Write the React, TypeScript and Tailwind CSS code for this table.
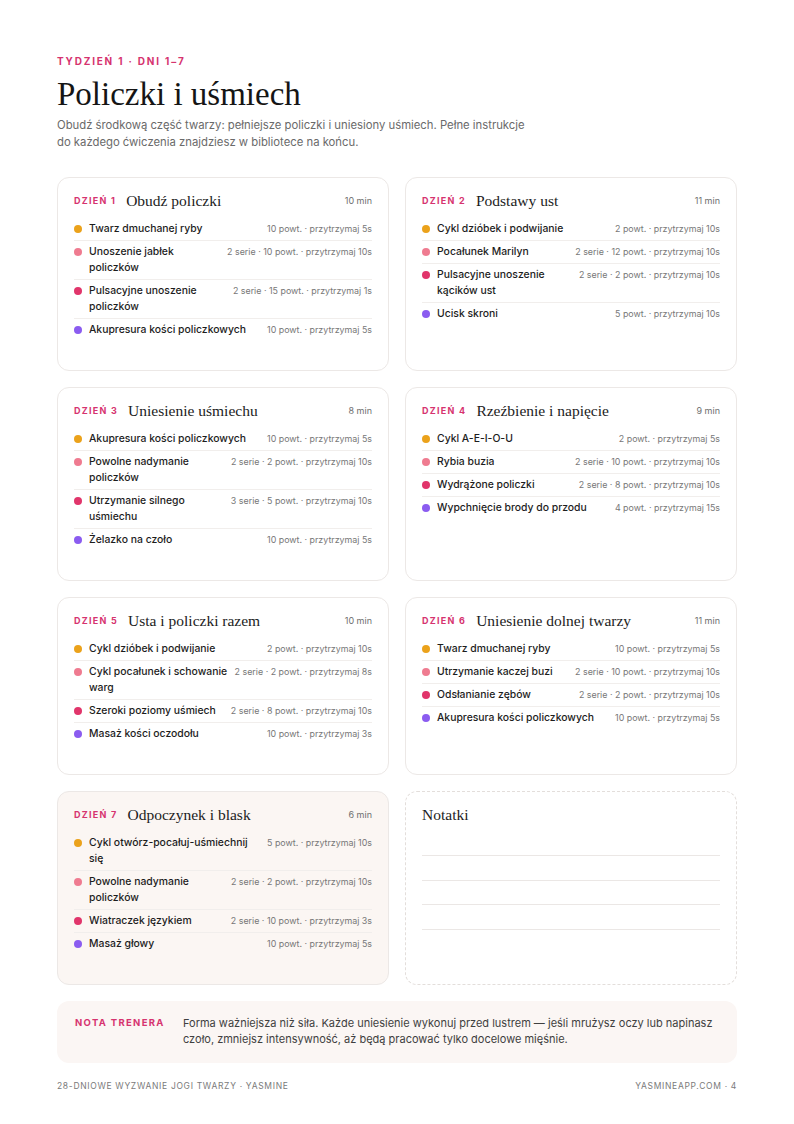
import React from "react";

type Ex = { name: string; spec: string };
type Day = { n: number; title: string; min: string; items: Ex[]; rest?: boolean };

const DOTS = ["bg-[#eba21b]", "bg-[#ef7b90]", "bg-[#e1356b]", "bg-[#8b5cf0]"];

const days: Day[] = [
  {
    n: 1,
    title: "Obudź policzki",
    min: "10 min",
    items: [
      { name: "Twarz dmuchanej ryby", spec: "10 powt. · przytrzymaj 5s" },
      { name: "Unoszenie jabłek policzków", spec: "2 serie · 10 powt. · przytrzymaj 10s" },
      { name: "Pulsacyjne unoszenie policzków", spec: "2 serie · 15 powt. · przytrzymaj 1s" },
      { name: "Akupresura kości policzkowych", spec: "10 powt. · przytrzymaj 5s" },
    ],
  },
  {
    n: 2,
    title: "Podstawy ust",
    min: "11 min",
    items: [
      { name: "Cykl dzióbek i podwijanie", spec: "2 powt. · przytrzymaj 10s" },
      { name: "Pocałunek Marilyn", spec: "2 serie · 12 powt. · przytrzymaj 10s" },
      { name: "Pulsacyjne unoszenie kącików ust", spec: "2 serie · 2 powt. · przytrzymaj 10s" },
      { name: "Ucisk skroni", spec: "5 powt. · przytrzymaj 10s" },
    ],
  },
  {
    n: 3,
    title: "Uniesienie uśmiechu",
    min: "8 min",
    items: [
      { name: "Akupresura kości policzkowych", spec: "10 powt. · przytrzymaj 5s" },
      { name: "Powolne nadymanie policzków", spec: "2 serie · 2 powt. · przytrzymaj 10s" },
      { name: "Utrzymanie silnego uśmiechu", spec: "3 serie · 5 powt. · przytrzymaj 10s" },
      { name: "Żelazko na czoło", spec: "10 powt. · przytrzymaj 5s" },
    ],
  },
  {
    n: 4,
    title: "Rzeźbienie i napięcie",
    min: "9 min",
    items: [
      { name: "Cykl A-E-I-O-U", spec: "2 powt. · przytrzymaj 5s" },
      { name: "Rybia buzia", spec: "2 serie · 10 powt. · przytrzymaj 10s" },
      { name: "Wydrążone policzki", spec: "2 serie · 8 powt. · przytrzymaj 10s" },
      { name: "Wypchnięcie brody do przodu", spec: "4 powt. · przytrzymaj 15s" },
    ],
  },
  {
    n: 5,
    title: "Usta i policzki razem",
    min: "10 min",
    items: [
      { name: "Cykl dzióbek i podwijanie", spec: "2 powt. · przytrzymaj 10s" },
      { name: "Cykl pocałunek i schowanie warg", spec: "2 serie · 2 powt. · przytrzymaj 8s" },
      { name: "Szeroki poziomy uśmiech", spec: "2 serie · 8 powt. · przytrzymaj 10s" },
      { name: "Masaż kości oczodołu", spec: "10 powt. · przytrzymaj 3s" },
    ],
  },
  {
    n: 6,
    title: "Uniesienie dolnej twarzy",
    min: "11 min",
    items: [
      { name: "Twarz dmuchanej ryby", spec: "10 powt. · przytrzymaj 5s" },
      { name: "Utrzymanie kaczej buzi", spec: "2 serie · 10 powt. · przytrzymaj 10s" },
      { name: "Odsłanianie zębów", spec: "2 serie · 2 powt. · przytrzymaj 10s" },
      { name: "Akupresura kości policzkowych", spec: "10 powt. · przytrzymaj 5s" },
    ],
  },
  {
    n: 7,
    title: "Odpoczynek i blask",
    min: "6 min",
    rest: true,
    items: [
      { name: "Cykl otwórz-pocałuj-uśmiechnij się", spec: "5 powt. · przytrzymaj 10s" },
      { name: "Powolne nadymanie policzków", spec: "2 serie · 2 powt. · przytrzymaj 10s" },
      { name: "Wiatraczek językiem", spec: "2 serie · 10 powt. · przytrzymaj 3s" },
      { name: "Masaż głowy", spec: "10 powt. · przytrzymaj 5s" },
    ],
  },
];

const serif = "font-['Liberation_Serif',serif]";

function DayCard({ d }: { d: Day }) {
  return (
    <div
      className={`rounded-xl border border-[#ece8e6] px-4 pt-[11px] pb-[29px] ${
        d.rest ? "bg-[#fbf6f3]" : "bg-white"
      }`}
    >
      <div className="flex h-6 items-center">
        <span className="text-[9px] font-bold tracking-[0.14em] text-[#d6336f]">DZIEŃ {d.n}</span>
        <span className={`${serif} ml-[10px] text-[15.5px] text-[#1c1c1c]`}>{d.title}</span>
        <span className="ml-auto text-[9px] text-[#6f6f6f]">{d.min}</span>
      </div>
      <div className="mt-[5px]">
        {d.items.map((it, i) => (
          <div
            key={i}
            className={`flex items-start py-[3px] ${
              i < d.items.length - 1 ? "border-b border-[#f1eeec]" : ""
            }`}
          >
            <span className={`mt-1 mr-[7px] h-2 w-2 shrink-0 rounded-full ${DOTS[i]}`} />
            <span className="flex-1 text-[10.4px] font-medium leading-4 text-[#1d1d1d]">
              {it.name}
            </span>
            <span className="ml-[5px] whitespace-nowrap text-right text-[8.9px] leading-4 text-[#777]">
              {it.spec}
            </span>
          </div>
        ))}
      </div>
    </div>
  );
}

export default function App() {
  return (
    <div className="min-h-[1124px] w-[794px] bg-white px-[57px] pt-[54px] font-['Inter',sans-serif]">
      <div className="text-[10px] font-bold leading-[14px] tracking-[0.18em] text-[#d6336f]">
        TYDZIEŃ 1 · DNI 1–7
      </div>
      <h1 className={`${serif} mt-[5px] text-[33px] leading-[42px] text-[#151515]`}>
        Policzki i uśmiech
      </h1>
      <p className="mt-[2px] text-[11.3px] leading-[17px] text-[#6a6a6a]">
        Obudź środkową część twarzy: pełniejsze policzki i uniesiony uśmiech. Pełne instrukcje
        <br />
        do każdego ćwiczenia znajdziesz w bibliotece na końcu.
      </p>

      <div className="mt-[26px] grid grid-cols-2 gap-4">
        {days.map((d) => (
          <DayCard key={d.n} d={d} />
        ))}
        <div className="rounded-xl border border-dashed border-[#e3dedb] bg-white px-4 pt-[11px]">
          <div className={`${serif} flex h-6 items-center text-[15.5px] text-[#1c1c1c]`}>Notatki</div>
          <div className="mt-[28px] h-px bg-[#ebe7e5]" />
          <div className="mt-[24px] h-px bg-[#ebe7e5]" />
          <div className="mt-[23px] h-px bg-[#ebe7e5]" />
          <div className="mt-[24px] h-px bg-[#ebe7e5]" />
        </div>
      </div>

      <div className="mt-4 flex rounded-xl bg-[#fbf6f4] pl-[18px] pr-6 pt-[14px] pb-4">
        <div className="w-[108px] shrink-0 text-[9.5px] font-bold leading-4 tracking-[0.14em] text-[#d6336f]">
          NOTA TRENERA
        </div>
        <div className="text-[11px] leading-4 text-[#3f3f3f]">
          Forma ważniejsza niż siła. Każde uniesienie wykonuj przed lustrem — jeśli mrużysz oczy lub
          napinasz czoło, zmniejsz intensywność, aż będą pracować tylko docelowe mięśnie.
        </div>
      </div>

      <div className="mt-[17px] flex justify-between text-[8.5px] leading-3 tracking-[0.08em] text-[#7a7a7a]">
        <span>28-DNIOWE WYZWANIE JOGI TWARZY · YASMINE</span>
        <span>YASMINEAPP.COM · 4</span>
      </div>
    </div>
  );
}
